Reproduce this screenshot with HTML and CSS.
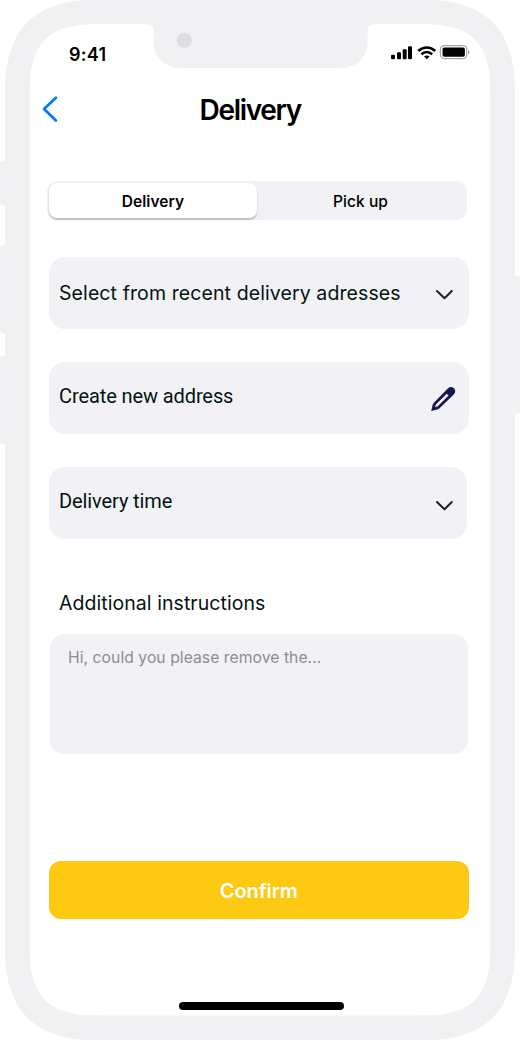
FILE: index.html
```html
<!DOCTYPE html>
<html lang="en">
<head>
<meta charset="utf-8">
<title>Delivery</title>
<link rel="stylesheet" href="styles.css">
</head>
<body>
<div class="phone">
  <svg class="frame" viewBox="0 0 520 1040" aria-hidden="true">
    <g fill="#f1f1f4">
      <path d="M6 161H3Q0 161 0 164V202Q0 205 3 205H6ZM6 245H3Q0 245 0 249V329Q0 333 3 333H6ZM6 356H3Q0 356 0 360V440Q0 444 3 444H6ZM514 276H518Q520 276 520 278V412Q520 414 518 414H514Z"/>
      <path d="M5 100C5 78 5.200 65.200 12 46.400A66 66 0 0 1 51 7C70 0 83 0 105 0H415C437 0 450 0 469 7A66 66 0 0 1 508 46.400C514.800 65.200 515 78 515 100V940C515 962 514.800 974.800 508 993.600A66 66 0 0 1 469 1033C450 1040 437 1040 415 1040H105C83 1040 70 1040 51 1033A66 66 0 0 1 12 993.600C5.200 974.800 5 962 5 940Z"/>
    </g>
    <path fill="#fff" d="M29.700 97C29.700 81 29.700 71 34.500 56.600A46 46 0 0 1 62 29.100C76 24.300 86 24.300 102 24.300H147.500Q153.500 24.300 153.500 30.300V42C153.500 57 165 68 180 68H341C356 68 367.700 57 367.700 42V30.300Q367.700 24.300 373.700 24.300H418C434 24.300 444 24.300 458 29.100A46 46 0 0 1 485.500 56.600C490.300 71 490.300 81 490.300 97V943C490.300 959 490.300 969 485.500 983A46 46 0 0 1 458 1010.600C444 1015.400 434 1015.400 418 1015.400H102C86 1015.400 76 1015.400 62 1010.600A46 46 0 0 1 34.500 983C29.700 969 29.700 959 29.700 943Z"/>
    <circle cx="184.300" cy="40.300" r="7.500" fill="#dedde4"/>
  </svg>

  <div class="screen">
    <div class="status">
      <span class="time">9:41</span>
      <svg class="indicators" width="80" height="18" viewBox="0 0 80 18">
        <rect x="1" y="9.800" width="4" height="4.500" rx="1.200"/>
        <rect x="7" y="7.300" width="4" height="7" rx="1.200"/>
        <rect x="12.700" y="4.300" width="4" height="10" rx="1.200"/>
        <rect x="18" y="1.200" width="4" height="13.100" rx="1.200"/>
        <path fill="none" stroke="#000" stroke-width="2.600" d="M28.300 6C33.300 1.300 40.300 1.300 45.300 6M31.400 9.300C34.700 6.300 38.900 6.300 42.200 9.300"/>
        <path d="M36.800 14.300L34 11.500C35.500 10.200 38.100 10.200 39.600 11.500Z"/>
        <rect x="50.500" y="0.700" width="26.200" height="13" rx="3.600" fill="none" stroke="#a6a6a6" stroke-width="1.200"/>
        <rect x="52.500" y="2.600" width="22.400" height="9.200" rx="1.800"/>
        <path fill="#a6a6a6" d="M78 5C80 5.700 80 8.800 78 9.500Z"/>
      </svg>
    </div>

    <header class="header">
      <svg class="back" width="18" height="28" viewBox="0 0 18 28"><path d="M14.900 2.700L3 14L14.900 25.500"/></svg>
      <h1 class="title">Delivery</h1>
    </header>

    <div class="segments">
      <div class="segment active"><span class="seg-delivery">Delivery</span></div>
      <div class="segment"><span class="seg-pickup">Pick up</span></div>
    </div>

    <div class="card recent">
      <span class="label label-recent">Select from recent delivery adresses</span>
      <svg class="chevron" width="20" height="14" viewBox="0 0 20 14"><path d="M3 3L10.500 10.300L17.800 3"/></svg>
    </div>
    <div class="card address">
      <span class="label label-address">Create new address</span>
      <svg class="pencil" width="28" height="28" viewBox="0 0 28 28">
        <path fill="#17174d" fill-rule="evenodd" d="M2.200 26L3.600 19.900Q3.900 18.700 4.900 17.700L18.800 3.500C20.800 1.600 23.300 1.600 25 3.300C26.700 5 26.700 7.500 24.800 9.400L10.500 23.300Q9.400 24.300 8.200 24.600ZM6 22.200L8.800 21.300L19.600 10.600L17.700 8.700L6.900 19.500Z"/>
      </svg>
    </div>
    <div class="card schedule">
      <span class="label label-time">Delivery time</span>
      <svg class="chevron" width="20" height="14" viewBox="0 0 20 14"><path d="M3 3L10.500 10.300L17.800 3"/></svg>
    </div>

    <h2 class="caption"><span>Additional instructions</span></h2>
    <div class="note"><span>Hi, could you please remove the...</span></div>

    <div class="confirm"><span>Confirm</span></div>
    <div class="home-bar"></div>
  </div>
</div>
</body>
</html>
```
FILE: styles.css
```css
* { box-sizing: border-box; }
body { margin: 0; background: #fff; font-family: Inter, "Liberation Sans", sans-serif; color: #000; }
.phone { position: relative; width: 520px; height: 1040px; overflow: hidden; }
.frame { position: absolute; inset: 0; width: 520px; height: 1040px; }
.screen { position: relative; height: 1040px; padding: 40px 51.500px 0 49px; display: flex; flex-direction: column; }
.screen span { white-space: nowrap; }

.status { display: flex; justify-content: space-between; height: 28px; padding-left: 20px; }
.time { font-size: 18px; line-height: 29px; font-weight: 600; letter-spacing: 0.250px; }
.indicators { margin: 5px -1.500px 0 0; }

.header { display: flex; height: 50px; margin: 17px 0 0 -8px; }
.back { margin: 10px 0 0 -0.500px; fill: none; stroke: #007aff; stroke-width: 2.700; stroke-linecap: round; stroke-linejoin: round; }
.title { margin: 0 0 0 141px; font-size: 28px; line-height: 51px; font-weight: 600; letter-spacing: -1.300px; white-space: nowrap; }

.segments { display: flex; width: 420px; height: 39px; margin: 46px 0 0 -2px; padding: 2px 0 2.500px 2px; border-radius: 10px; background: #f2f1f6; }
.segment { flex: 1; display: flex; justify-content: center; align-items: center; padding-top: 2px; font-size: 15.500px; font-weight: 500; letter-spacing: 0.080px; }
.seg-pickup { margin-right: 3px; }
.active { flex: none; width: 208px; background: #fff; border-radius: 8px; font-weight: 600; box-shadow: 0 1.500px 2px rgba(0, 0, 0, 0.220); }

.card { display: flex; justify-content: space-between; width: 419.500px; height: 72px; padding: 0 15px 0 10px; border-radius: 16px; background: #f2f1f6; }
.recent { margin-top: 37px; }
.address { margin-top: 33px; padding-right: 12px; }
.schedule { margin-top: 33px; width: 418px; padding-right: 13.500px; }
.label { font-size: 19.500px; line-height: 72px; color: #03150f; letter-spacing: 0.100px; }
.label-address, .label-time { font-family: Roboto, sans-serif; font-size: 20px; line-height: 69px; letter-spacing: -0.100px; }
.chevron { margin-top: 30.500px; fill: none; stroke: #222; stroke-width: 2; stroke-linecap: round; stroke-linejoin: round; }
.schedule .chevron { margin-top: 32px; }
.pencil { margin-top: 23px; }

.caption { margin: 49px 0 0 10px; height: 30px; font-size: 19.500px; line-height: 30px; font-weight: 400; color: #03150f; letter-spacing: 0.060px; }
.note { width: 417.500px; height: 120px; margin: 16px 0 0 1px; padding: 13px 18px; border-radius: 14px; background: #f2f1f6; color: #8d8d90; font-size: 15.700px; line-height: 22px; letter-spacing: 0.050px; }
.confirm { display: flex; align-items: center; justify-content: center; width: 419.500px; height: 58.500px; margin-top: 106.500px; padding-top: 2px; border-radius: 12px; background: #fdc913; color: #fff; font-size: 20px; font-weight: 600; letter-spacing: -0.050px; }
.home-bar { width: 165px; height: 8px; margin: 82.500px 0 0 129.700px; border-radius: 4px; background: #000; }
```
